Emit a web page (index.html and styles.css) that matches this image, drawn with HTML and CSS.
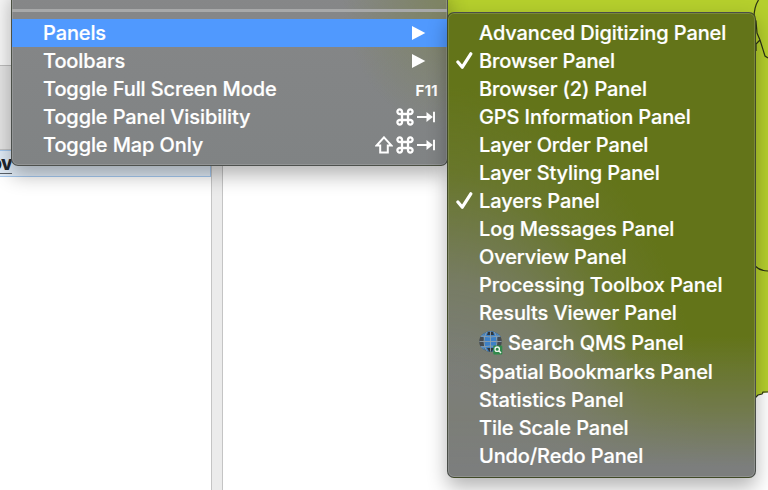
FILE: index.html
```html
<!DOCTYPE html>
<html lang="en">
<head>
<meta charset="utf-8">
<title>View menu</title>
<link rel="stylesheet" href="styles.css">
</head>
<body>
<svg class="defs" width="0" height="0" aria-hidden="true">
  <symbol id="check" viewBox="0 0 18 18"><path d="M1.9 10 6.3 15.2 14.8 1.8" fill="none" stroke="currentColor" stroke-width="3.2" stroke-linecap="round" stroke-linejoin="round"/></symbol>
  <symbol id="arrow" viewBox="0 0 14 14"><path d="M0 0 13.3 7 0 14Z" fill="currentColor"/></symbol>
  <symbol id="command" viewBox="0 0 18 18"><path d="M6 6H12V12H6ZM6 6H3.8A2.3 2.3 0 1 1 6 3.8ZM12 6V3.8A2.3 2.3 0 1 1 14.2 6ZM12 12H14.2A2.3 2.3 0 1 1 12 14.2ZM6 12V14.2A2.3 2.3 0 1 1 3.8 12Z" fill="none" stroke="currentColor" stroke-width="2.3"/></symbol>
  <symbol id="tab" viewBox="0 0 18 12"><path d="M0 6H12M17 .8V11.2" fill="none" stroke="currentColor" stroke-width="2"/><path d="M9.5 1 15.8 6 9.5 11Z" fill="currentColor"/></symbol>
  <symbol id="shift" viewBox="0 0 18 18"><path d="M9 1.3 16.3 9.4H12.8V16.6H5.2V9.4H1.7Z" fill="none" stroke="currentColor" stroke-width="2"/></symbol>
</svg>
<main class="window">
  <aside class="dock">
    <div class="dock-top"></div>
    <div class="dock-tools"></div>
    <div class="dock-row"><span>ov</span></div>
  </aside>
  <div class="splitter"></div>
  <section class="map">
    <svg viewBox="223 0 545 490" width="545" height="490">
      <path d="M440 0H768V392L764 393 761 394 758 395 755 398 740 410 448 130Z" fill="#b5cf2d"/>
      <path d="M758.5 0Q754 7 754 18L756 21 757 33 760 40 765 56 768 58M760 40 756 44V51M755 266Q760 271 768 271M755 398 758 395 762 394 763 392 768 392" fill="none" stroke="#2c3315" stroke-width="1.2"/>
    </svg>
  </section>
</main>

<nav class="menu view-menu">
  <div class="separator"></div>
  <div class="item active"><span>Panels</span><svg class="arrow"><use href="#arrow"/></svg></div>
  <div class="item"><span>Toolbars</span><svg class="arrow"><use href="#arrow"/></svg></div>
  <div class="item"><span>Toggle Full Screen Mode</span><kbd class="fkey">F11</kbd></div>
  <div class="item"><span>Toggle Panel Visibility</span><kbd><svg class="key"><use href="#command"/></svg><svg class="tab"><use href="#tab"/></svg></kbd></div>
  <div class="item"><span>Toggle Map Only</span><kbd><svg class="key"><use href="#shift"/></svg><svg class="key"><use href="#command"/></svg><svg class="tab"><use href="#tab"/></svg></kbd></div>
</nav>

<nav class="menu panels-menu">
  <div class="item"><i></i><span>Advanced Digitizing Panel</span></div>
  <div class="item"><i><svg class="check"><use href="#check"/></svg></i><span>Browser Panel</span></div>
  <div class="item"><i></i><span>Browser (2) Panel</span></div>
  <div class="item"><i></i><span>GPS Information Panel</span></div>
  <div class="item"><i></i><span>Layer Order Panel</span></div>
  <div class="item"><i></i><span>Layer Styling Panel</span></div>
  <div class="item"><i><svg class="check"><use href="#check"/></svg></i><span>Layers Panel</span></div>
  <div class="item"><i></i><span>Log Messages Panel</span></div>
  <div class="item"><i></i><span>Overview Panel</span></div>
  <div class="item"><i></i><span>Processing Toolbox Panel</span></div>
  <div class="item"><i></i><span>Results Viewer Panel</span></div>
  <div class="item tall"><i></i>
    <svg class="globe" viewBox="0 0 24 24">
      <ellipse cx="11.5" cy="10.5" rx="11.3" ry="10.2" fill="#454b50"/>
      <path d="M7 1.2Q11.5-.6 16 1.2L19 5 17.5 10 18 17 14 20.4H9L5 17 5.5 10 4 5Z" fill="#3c80c6"/>
      <path d="M9 1H14L15 4H8ZM8 17H15L13 20.5H10Z" fill="#30363b"/>
      <path d="M1 6Q3 3 6 1.5L5 6ZM17 1.5Q20 3 22 6H18ZM1 15H5L6 19Q3 18 1 15Z" fill="#4b86bd"/>
      <path d="M.4 10.5H22.6M2 5Q11.5 7 21 5M2 16Q11.5 14 21 16M11.5.5V20.5M7.5 1Q2.5 10.5 7.5 20M15.5 1Q20.5 10.5 15.5 20" fill="none" stroke="#8f9faa" stroke-width=".9"/>
      <rect x="14.3" y="14.5" width="9" height="9" rx="1" fill="#30894a"/>
      <circle cx="18.2" cy="18.2" r="2.2" fill="none" stroke="#eef6ef" stroke-width="1.3"/><path d="M19.8 19.8 22 22" stroke="#eef6ef" stroke-width="1.5"/>
    </svg><span>Search QMS Panel</span></div>
  <div class="item"><i></i><span>Spatial Bookmarks Panel</span></div>
  <div class="item"><i></i><span>Statistics Panel</span></div>
  <div class="item"><i></i><span>Tile Scale Panel</span></div>
  <div class="item"><i></i><span>Undo/Redo Panel</span></div>
</nav>
</body>
</html>
```
FILE: styles.css
```css
* { box-sizing: border-box; }
body {
  margin: 0;
  width: 768px;
  height: 490px;
  overflow: hidden;
  font-family: Inter, "Liberation Sans", sans-serif;
  background: #fff;
}
svg { display: block; flex: none; }
.defs { position: absolute; }
.window { display: flex; height: 490px; }
.dock { width: 211px; display: flex; flex-direction: column; background: #fff; }
.dock-top { height: 66px; background: #f7f7f7; border-bottom: 1px solid #bdbdbd; }
.dock-tools { height: 84px; background: #e4e4e4; border-bottom: 1px solid #c4c4c4; }
.dock-row {
  height: 27px;
  background: #e0ebf6;
  border: solid #a4c8ef;
  border-width: 1px 1px 1px 0;
  font: 800 19px/25px Inter, sans-serif;
  letter-spacing: -.7px;
  color: #20262e;
}
.dock-row span {
  display: flex;
  justify-content: flex-end;
  width: 12px;
  height: 23px;
  white-space: nowrap;
  border-bottom: 1px solid #59616a;
}
.splitter { width: 12px; background: #ebebeb; border: solid #c4c4c4; border-width: 0 1px; }
.map { flex: 1; background: #fff; }

.menu {
  position: absolute;
  color: #fff;
  font-size: 20px;
  font-weight: 500;
  letter-spacing: -.11px;
  -webkit-text-stroke: .2px #fff;
  border: 1px solid rgba(48, 52, 48, .65);
  box-shadow: inset 0 0 0 1px rgba(255, 255, 255, .14), 0 9px 20px rgba(0, 0, 0, .3);
}
.view-menu {
  left: 11px;
  top: -12px;
  width: 437px;
  height: 178px;
  padding-top: 20px;
  border-radius: 0 0 7px 7px;
  background:
    radial-gradient(ellipse 105px 140px at 100% 0, #7d835f, rgba(125, 131, 95, 0)),
    linear-gradient(#868788, #808384);
}
.separator { height: 3px; margin-bottom: 7px; background: #a8a9a9; }
.item { display: flex; align-items: center; height: 28px; white-space: nowrap; }
.view-menu .item { padding: 0 12px 0 31px; justify-content: space-between; }
.view-menu .active { background: #5099fe; }
.arrow { width: 14px; height: 14px; margin-right: 9px; }
kbd { display: flex; align-items: center; gap: 3px; font: inherit; }
.key { width: 18px; height: 18px; }
.tab { width: 18px; height: 12px; }
.fkey { font-size: 15px; font-weight: 600; letter-spacing: .3px; margin-right: -3px; padding-top: 3px; }

.panels-menu {
  left: 447px;
  top: 12px;
  width: 309px;
  height: 466px;
  padding-top: 6px;
  border-radius: 7px;
  background:
    linear-gradient(to top, #7c7e7d 10px, rgba(124, 126, 112, .6) 65px, rgba(120, 126, 90, 0) 140px),
    radial-gradient(ellipse 260px 390px at 0 100%, #7c7e80 22%, rgba(124, 126, 118, .8) 50%, rgba(112, 122, 70, .4) 78%, rgba(100, 116, 26, 0)),
    #637419;
}
.panels-menu i { width: 31px; flex: none; padding-left: 8px; }
.check { width: 18px; height: 18px; }
.panels-menu .tall { height: 31px; }
.globe { width: 24px; height: 24px; margin-right: 5px; }
```
